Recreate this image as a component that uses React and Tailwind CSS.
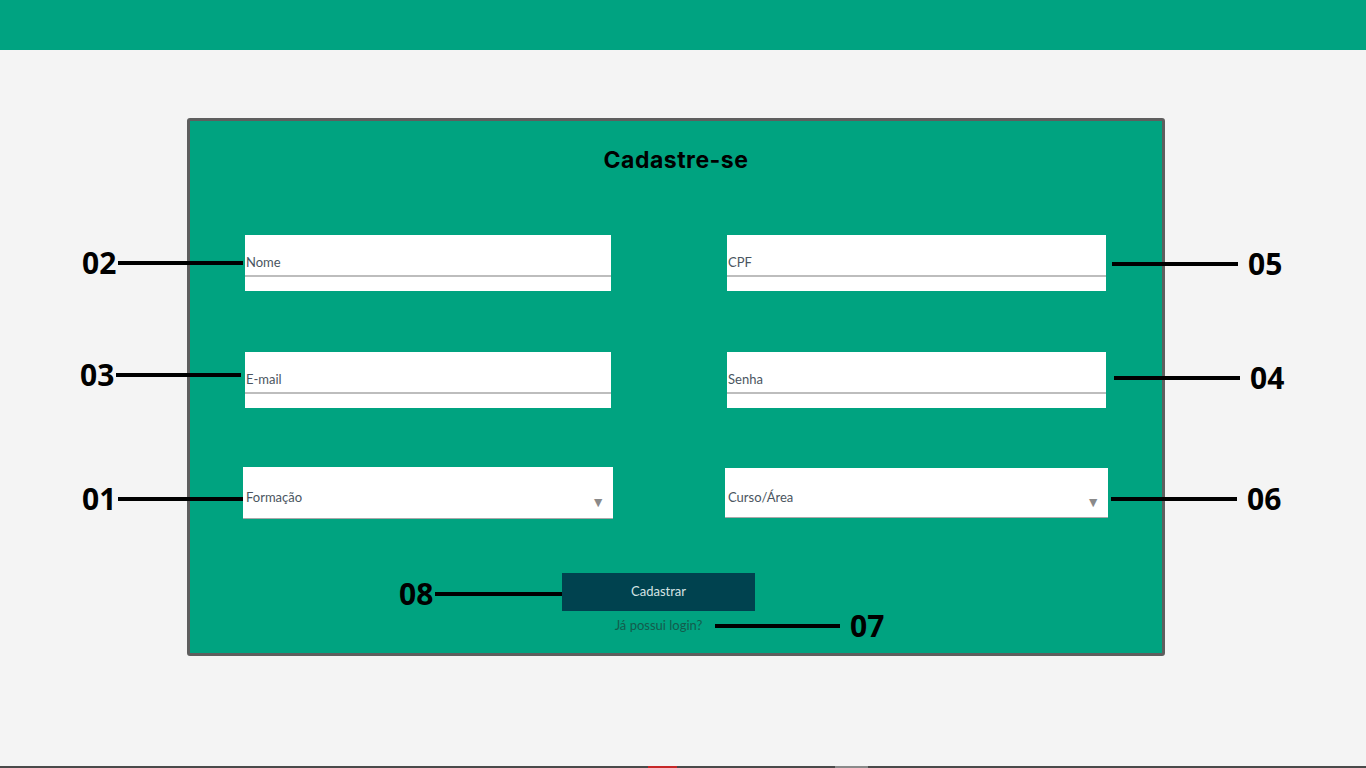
import React from "react";

const labelFont = { fontFamily: '"Lato", "Liberation Sans", sans-serif' };

function TextField({ label, width }) {
  return (
    <div className={`bg-white h-[56px] ${width}`}>
      <div className="h-[42px] border-b-2 border-[#bdbdbd] pt-[19px] pl-[1px] text-[13px] leading-[16px] text-[#4a5560]">
        {label}
      </div>
    </div>
  );
}

function SelectField({ label, width, height }) {
  return (
    <div className={`bg-white border-b border-[#a9a9a9] flex items-center justify-between pl-[3px] pr-[8px] ${width} ${height}`}>
      <span className="mt-[9px] text-[13px] leading-[16px] text-[#4a5560]">{label}</span>
      <span className="mt-[18px] text-[14px] leading-[14px] text-[#8a8a8a]">▼</span>
    </div>
  );
}

function Note({ num, side, left, top, line }) {
  const n = (
    <span
      className="w-[36px] text-[30px] leading-[30px] font-bold text-black"
      style={{ fontFamily: '"Open Sans", "Liberation Sans", sans-serif' }}
    >
      {num}
    </span>
  );
  const bar = <span className={`h-[4px] bg-black ${line}`} />;
  return (
    <div className={`absolute flex items-center h-[30px] ${left} ${top}`}>
      {side === "left" ? (
        <>
          {n}
          {bar}
        </>
      ) : (
        <>
          {bar}
          <span className="w-[10px]" />
          {n}
        </>
      )}
    </div>
  );
}

export default function App() {
  return (
    <div className="relative h-screen bg-[#f4f4f4] overflow-hidden" style={labelFont}>
      <div className="h-[50px] bg-[#00a381]" />

      <div className="ml-[187px] mt-[68px] w-[978px] h-[538px] border-[3px] border-[#5e5e5e] rounded-[3px] bg-[#00a380]">
        <h1
          className="pt-[26px] text-center text-[23px] leading-[26px] font-bold tracking-[0.5px] text-black"
          style={{ fontFamily: '"Inter", "Liberation Sans", sans-serif' }}
        >
          Cadastre-se
        </h1>

        <div className="mt-[62px] flex ml-[55px] gap-[116px]">
          <TextField label="Nome" width="w-[366px]" />
          <TextField label="CPF" width="w-[379px]" />
        </div>

        <div className="mt-[61px] flex ml-[55px] gap-[116px]">
          <TextField label="E-mail" width="w-[366px]" />
          <TextField label="Senha" width="w-[379px]" />
        </div>

        <div className="mt-[59px] flex items-start ml-[53px] gap-[112px]">
          <SelectField label="Formação" width="w-[370px]" height="h-[52px]" />
          <div className="mt-[1px]">
            <SelectField label="Curso/Área" width="w-[383px]" height="h-[50px]" />
          </div>
        </div>

        <div className="mt-[54px] ml-[372px] w-[193px] flex flex-col items-center">
          <button className="w-[193px] h-[38px] bg-[#00424f] text-[13px] text-[#d6e4e4]">
            Cadastrar
          </button>
          <a className="mt-[6px] text-[13px] leading-[16px] text-[#135c4d]">Já possui login?</a>
        </div>
      </div>

      <Note num="02" side="left" left="left-[82px]" top="top-[248px]" line="w-[125px]" />
      <Note num="03" side="left" left="left-[80px]" top="top-[360px]" line="w-[125px]" />
      <Note num="01" side="left" left="left-[82px]" top="top-[484px]" line="w-[125px]" />
      <Note num="08" side="left" left="left-[399px]" top="top-[579px]" line="w-[127px]" />
      <Note num="05" side="right" left="left-[1112px]" top="top-[249px]" line="w-[126px]" />
      <Note num="04" side="right" left="left-[1114px]" top="top-[363px]" line="w-[126px]" />
      <Note num="06" side="right" left="left-[1111px]" top="top-[484px]" line="w-[126px]" />
      <Note num="07" side="right" left="left-[715px]" top="top-[611px]" line="w-[125px]" />

      <div className="absolute bottom-0 left-0 right-0 h-[2px] bg-[#4a4a4a] flex">
        <span className="ml-[648px] w-[29px] bg-[#c62828]" />
        <span className="ml-[158px] w-[33px] bg-[#8a8a8a]" />
      </div>
    </div>
  );
}
